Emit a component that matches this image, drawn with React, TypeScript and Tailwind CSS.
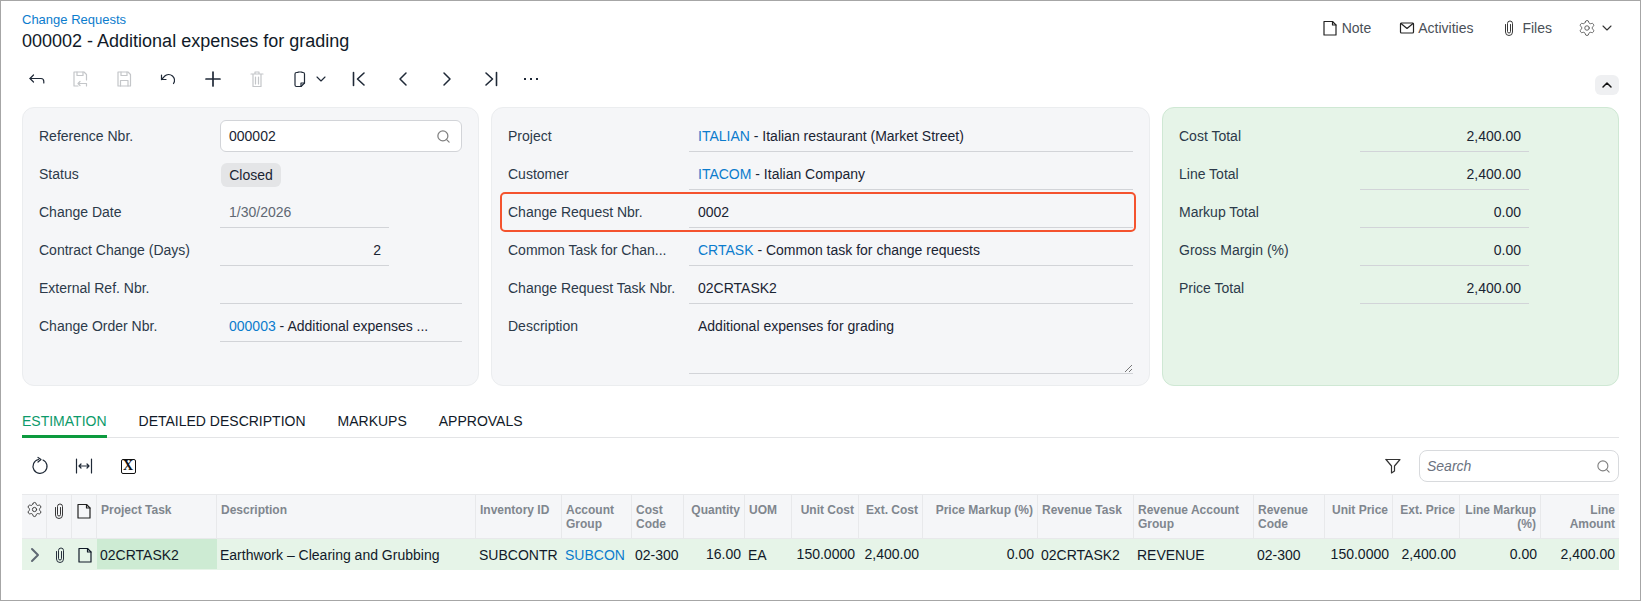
import type { ReactNode } from "react"
import { ChevronDown, ChevronUp, ChevronLeft, ChevronRight, Plus, Search, Settings } from "lucide-react"

function Ic({ children, className = "" }: { children: ReactNode; className?: string }) {
  return (
    <svg viewBox="0 0 20 20" fill="none" stroke="currentColor" strokeWidth={1.2} strokeLinecap="round" strokeLinejoin="round" className={`h-5 w-5 shrink-0 ${className}`}>
      {children}
    </svg>
  )
}

const Doc = ({ className = "" }: { className?: string }) => (
  <Ic className={className}>
    <path d="M4 3.5h8.5l3.5 3.5v10H4z" />
    <path d="M12.5 3.5V7H16" />
  </Ic>
)

const Clip = ({ className = "" }: { className?: string }) => (
  <Ic className={`[stroke-width:0.9] ${className}`}>
    <path d="M6.5 6.5v7.5a3.5 3.5 0 0 0 7 0V5.5a2.5 2.5 0 0 0-5 0V13.5a1.5 1.5 0 0 0 3 0V6.5" />
  </Ic>
)

const Floppy = ({ children }: { children?: ReactNode }) => (
  <Ic>
    <path d="M4 3h10l2.5 2.5V17H4z" />
    <path d="M7 3v3.5h6V3" />
    {children}
  </Ic>
)

function ToolBtn({ children, className = "w-11" }: { children: ReactNode; className?: string }) {
  return <button className={`flex h-10 items-center justify-center ${className}`}>{children}</button>
}

function Field({ label, children, short, right }: { label: string; children?: ReactNode; short?: boolean; right?: boolean }) {
  return (
    <div className="flex h-[38px] items-center">
      <div className="w-[181px] shrink-0 text-[#2c3a4a]">{label}</div>
      <div className={`flex h-8 items-center border-b border-[#d2d4d8] px-[9px] ${short ? "w-[169px]" : "flex-1"} ${right ? "justify-end pr-2" : ""}`}>
        {children}
      </div>
    </div>
  )
}

const A = ({ children }: { children: ReactNode }) => <span className="text-[#0b7ccd]">{children}</span>

const cols =
  "grid grid-cols-[25px_25px_25px_120px_259px_86px_70px_52px_61px_47px_67px_64px_115px_96px_120px_71px_68px_67px_81px_78px]"

const headers: { text: string; right?: boolean }[] = [
  { text: "Project Task" },
  { text: "Description" },
  { text: "Inventory ID" },
  { text: "Account Group" },
  { text: "Cost Code" },
  { text: "Quantity", right: true },
  { text: "UOM" },
  { text: "Unit Cost", right: true },
  { text: "Ext. Cost", right: true },
  { text: "Price Markup (%)", right: true },
  { text: "Revenue Task" },
  { text: "Revenue Account Group" },
  { text: "Revenue Code" },
  { text: "Unit Price", right: true },
  { text: "Ext. Price", right: true },
  { text: "Line Markup (%)", right: true },
  { text: "Line Amount", right: true },
]

const cells: { text: string; right?: boolean; link?: boolean }[] = [
  { text: "Earthwork – Clearing and Grubbing" },
  { text: "SUBCONTR" },
  { text: "SUBCON", link: true },
  { text: "02-300" },
  { text: "16.00", right: true },
  { text: "EA" },
  { text: "150.0000", right: true },
  { text: "2,400.00", right: true },
  { text: "0.00", right: true },
  { text: "02CRTASK2" },
  { text: "REVENUE" },
  { text: "02-300" },
  { text: "150.0000", right: true },
  { text: "2,400.00", right: true },
  { text: "0.00", right: true },
  { text: "2,400.00", right: true },
]

export default function App() {
  return (
    <div className="h-[601px] w-[1641px] overflow-hidden border border-[#a6a6a6] bg-white px-[21px] font-['Liberation_Sans',sans-serif] text-sm text-[#1a2433]">
      {/* page title */}
      <div className="flex h-[58px] items-start justify-between">
        <div className="pt-[9px]">
          <div className="h-[19px] text-[13px] leading-5 text-[#0b7ccd]">Change Requests</div>
          <div className="h-6 text-lg leading-6 text-[#111a28]">000002 - Additional expenses for grading</div>
        </div>
        <div className="flex h-[54px] items-center text-[#4a5058]">
          <Doc className="mr-[1px] text-[#222]" />
          <span className="ml-[1px] mr-[26px]">Note</span>
          <Ic className="text-[#222]">
            <rect x="3.5" y="5" width="13" height="10" rx="1" />
            <path d="M4 5.5l6 5 6-5" />
          </Ic>
          <span className="ml-[1px] mr-[26px]">Activities</span>
          <Clip className="text-[#222]" />
          <span className="ml-[3px] mr-[26px]">Files</span>
          <Settings className="h-[18px] w-[18px] text-[#555]" strokeWidth={1.2} />
          <ChevronDown className="ml-[3px] mr-[4px] h-4 w-4 text-[#333]" strokeWidth={1.6} />
        </div>
      </div>

      {/* toolbar */}
      <div className="flex h-10 items-center justify-between text-[#1f2937]">
        <div className="-ml-2 flex items-center">
          <ToolBtn className="w-11 pl-[2px]">
            <Ic>
              <path d="M3 9.5h11c1.8 0 2.8 1.2 2.8 3v1.5" />
              <path d="M6.5 6L3 9.5 6.5 13" />
            </Ic>
          </ToolBtn>
          <ToolBtn className="w-11 text-[#c4c6c9]">
            <Ic>
              <path d="M8 17H4V3h10l2.5 2.5V11" />
              <path d="M7 3v3.5h6V3" />
              <path d="M8 14.5h8.5V17M8 14.5l2-2M8 14.5l2 2" />
            </Ic>
          </ToolBtn>
          <ToolBtn className="w-11 text-[#c4c6c9]">
            <Floppy>
              <path d="M6.5 17v-5.5h7.5V17" />
            </Floppy>
          </ToolBtn>
          <ToolBtn>
            <Ic>
              <path d="M15.5 14.5a6 6 0 0 0-1-7.5 6 6 0 0 0-8 .3L3.5 10.5" />
              <path d="M3.5 6v4.5H8" />
            </Ic>
          </ToolBtn>
          <ToolBtn className="w-11 pl-[2px]">
            <Plus className="h-6 w-6" strokeWidth={1.7} />
          </ToolBtn>
          <ToolBtn className="w-11 pl-[2px] text-[#c4c6c9]">
            <Ic>
              <path d="M4 5h12M8 5V3h4v2M6 5v12.5h8V5M8.5 8v7M11.5 8v7" />
            </Ic>
          </ToolBtn>
          <ToolBtn className="w-[59px] justify-start pl-3">
            <Ic>
              <path d="M5 5a1.5 1.5 0 0 1 1.5-1.5H8V3h4v.5h1A1.5 1.5 0 0 1 14.5 5v9l-3.5 3.5H6.5A1.5 1.5 0 0 1 5 16z" />
              <path d="M14.5 14H11v3.5" />
            </Ic>
            <ChevronDown className="ml-[3px] h-4 w-4" strokeWidth={1.7} />
          </ToolBtn>
          <ToolBtn>
            <Ic className="[stroke-width:1.6]">
              <path d="M4.5 3.5v13M15 4l-6.5 6 6.5 6" />
            </Ic>
          </ToolBtn>
          <ToolBtn>
            <ChevronLeft className="h-6 w-6" strokeWidth={1.5} />
          </ToolBtn>
          <ToolBtn>
            <ChevronRight className="h-6 w-6" strokeWidth={1.5} />
          </ToolBtn>
          <ToolBtn>
            <Ic className="[stroke-width:1.6]">
              <path d="M15.5 3.5v13M5 4l6.5 6L5 16" />
            </Ic>
          </ToolBtn>
          <ToolBtn className="w-9">
            <span className="flex gap-[4px]">
              <i className="h-[2px] w-[2px] bg-[#1f2937]" />
              <i className="h-[2px] w-[2px] bg-[#1f2937]" />
              <i className="h-[2px] w-[2px] bg-[#1f2937]" />
            </span>
          </ToolBtn>
        </div>
        <button className="mt-3 flex h-5 w-6 items-center justify-center rounded-md bg-[#eff0f2]">
          <ChevronUp className="h-4 w-4 text-[#111]" strokeWidth={2.2} />
        </button>
      </div>

      {/* summary cards */}
      <div className="mt-2 grid h-[279px] grid-cols-[457px_659px_457px] gap-3">
        <div className="rounded-xl border border-[#ebedef] bg-[#f5f6f8] px-4 pt-[9px]">
          <div className="flex h-[38px] items-center">
            <div className="w-[181px] shrink-0 text-[#2c3a4a]">Reference Nbr.</div>
            <div className="flex h-8 flex-1 items-center justify-between rounded-md border border-[#d2d4d8] bg-white px-2">
              <span>000002</span>
              <Search className="mr-[2px] h-[15px] w-[15px] text-[#808080]" strokeWidth={2} />
            </div>
          </div>
          <div className="flex h-[38px] items-center">
            <div className="w-[181px] shrink-0 text-[#2c3a4a]">Status</div>
            <div className="ml-px mt-[2px] flex h-6 w-[60px] items-center justify-center rounded-md bg-[#e4e5e7]">Closed</div>
          </div>
          <Field label="Change Date" short>
            <span className="text-[#5f6873]">1/30/2026</span>
          </Field>
          <Field label="Contract Change (Days)" short right>
            2
          </Field>
          <Field label="External Ref. Nbr." />
          <Field label="Change Order Nbr.">
            <span className="whitespace-pre">
              <A>000003</A> - Additional expenses ...
            </span>
          </Field>
        </div>

        <div className="rounded-xl border border-[#ebedef] bg-[#f5f6f8] px-4 pt-[9px]">
          <Field label="Project">
            <span>
              <A>ITALIAN</A> - Italian restaurant (Market Street)
            </span>
          </Field>
          <Field label="Customer">
            <span>
              <A>ITACOM</A> - Italian Company
            </span>
          </Field>
          <div className="relative">
            <Field label="Change Request Nbr.">0002</Field>
            <div className="absolute -inset-y-px -left-2 -right-[3px] rounded-[5px] border-2 border-[#f4532e]" />
          </div>
          <Field label="Common Task for Chan...">
            <span>
              <A>CRTASK</A> - Common task for change requests
            </span>
          </Field>
          <Field label="Change Request Task Nbr.">02CRTASK2</Field>
          <div className="flex">
            <div className="w-[181px] shrink-0 pt-[9px] text-[#2c3a4a]">Description</div>
            <div className="relative mt-[3px] h-[64px] flex-1 border-b border-[#d2d4d8] px-[9px] pt-[6px]">
              Additional expenses for grading
              <svg viewBox="0 0 8 8" className="absolute bottom-[1px] right-[1px] h-2 w-2 text-[#555]" stroke="currentColor" strokeWidth={0.8}>
                <path d="M1 8L8 1M5 8L8 5" />
              </svg>
            </div>
          </div>
        </div>

        <div className="rounded-xl border border-[#cfe8d4] bg-[#e6f4e8] px-4 pt-[9px]">
          {[
            ["Cost Total", "2,400.00"],
            ["Line Total", "2,400.00"],
            ["Markup Total", "0.00"],
            ["Gross Margin (%)", "0.00"],
            ["Price Total", "2,400.00"],
          ].map(([label, value]) => (
            <Field key={label} label={label} short right>
              {value}
            </Field>
          ))}
        </div>
      </div>

      {/* tabs */}
      <div className="mt-[25px] flex gap-8 border-b border-[#e3e4e6] text-[#111a28]">
        <div className="-mb-px h-[27px] border-b-[3px] border-[#0c9a3e] leading-5 text-[#0c9a6a]">ESTIMATION</div>
        <div className="leading-5">DETAILED DESCRIPTION</div>
        <div className="leading-5">MARKUPS</div>
        <div className="leading-5">APPROVALS</div>
      </div>

      {/* grid toolbar */}
      <div className="flex h-14 items-center justify-between">
        <div className="-ml-1 flex items-center text-[#1f2937]">
          <ToolBtn>
            <Ic>
              <path d="M8.5 3.5a7 7 0 1 0 4.5.5" />
              <path d="M8 1.5l3 2-3 2.5" />
            </Ic>
          </ToolBtn>
          <ToolBtn>
            <Ic>
              <path d="M2.5 3v14M17.5 3v14M5 10h10M7 8l-2 2 2 2M13 8l2 2-2 2" />
            </Ic>
          </ToolBtn>
          <ToolBtn>
            <span className="flex h-[15px] w-[15px] items-center justify-center rounded-[2px] border border-[#111] font-['Liberation_Serif',serif] text-[14px] leading-none font-bold text-[#111]">
              X
            </span>
          </ToolBtn>
        </div>
        <div className="flex items-center">
          <Ic className="mr-4 text-[#333]">
            <path d="M3 3.5h14L11.5 10v2" />
            <path d="M3 3.5L8.5 10v7l3-2v-3" />
          </Ic>
          <div className="flex h-8 w-[200px] items-center justify-between rounded-lg border border-[#d8dadd] pl-[7px] pr-[7px]">
            <span className="italic text-[#6b7280]">Search</span>
            <Search className="h-[15px] w-[15px] text-[#808080]" strokeWidth={1.8} />
          </div>
        </div>
      </div>

      {/* table */}
      <div className={`${cols} h-[45px] border-y border-[#e8e9eb] bg-[#f5f6f8] text-xs leading-[14px] font-bold text-[#80868e]`}>
        <div className="flex justify-center border-r border-[#e8e9eb] pt-[6px]">
          <Settings className="h-[17px] w-[17px] text-[#333]" strokeWidth={1.3} />
        </div>
        <div className="flex justify-center border-r border-[#e8e9eb] pt-[6px]">
          <Clip className="text-[#222]" />
        </div>
        <div className="flex justify-center border-r border-[#e8e9eb] pt-[6px]">
          <Doc className="text-[#222]" />
        </div>
        {headers.map((h) => (
          <div key={h.text} className={`border-r border-[#e8e9eb] px-1 pt-[8px] last:border-r-0 ${h.right ? "text-right" : ""}`}>
            {h.text}
          </div>
        ))}
      </div>
      <div className={`${cols} h-[31px] items-center bg-[#e6f4e8] text-[#111a28]`}>
        <div className="flex justify-center">
          <ChevronRight className="h-6 w-6 text-[#5f6873]" strokeWidth={2} />
        </div>
        <div className="flex justify-center">
          <Clip />
        </div>
        <div className="flex justify-center">
          <Doc />
        </div>
        <div className="flex h-[30px] items-center self-start bg-[#cdebd3] pl-[3px] pt-[2px]">02CRTASK2</div>
        {cells.map((c, i) => (
          <div key={i} className={`whitespace-nowrap pl-[3px] pr-1 ${c.right ? "pb-[2px] text-right" : ""} ${c.link ? "text-[#0b7ccd]" : ""}`}>
            {c.text}
          </div>
        ))}
      </div>
    </div>
  )
}
